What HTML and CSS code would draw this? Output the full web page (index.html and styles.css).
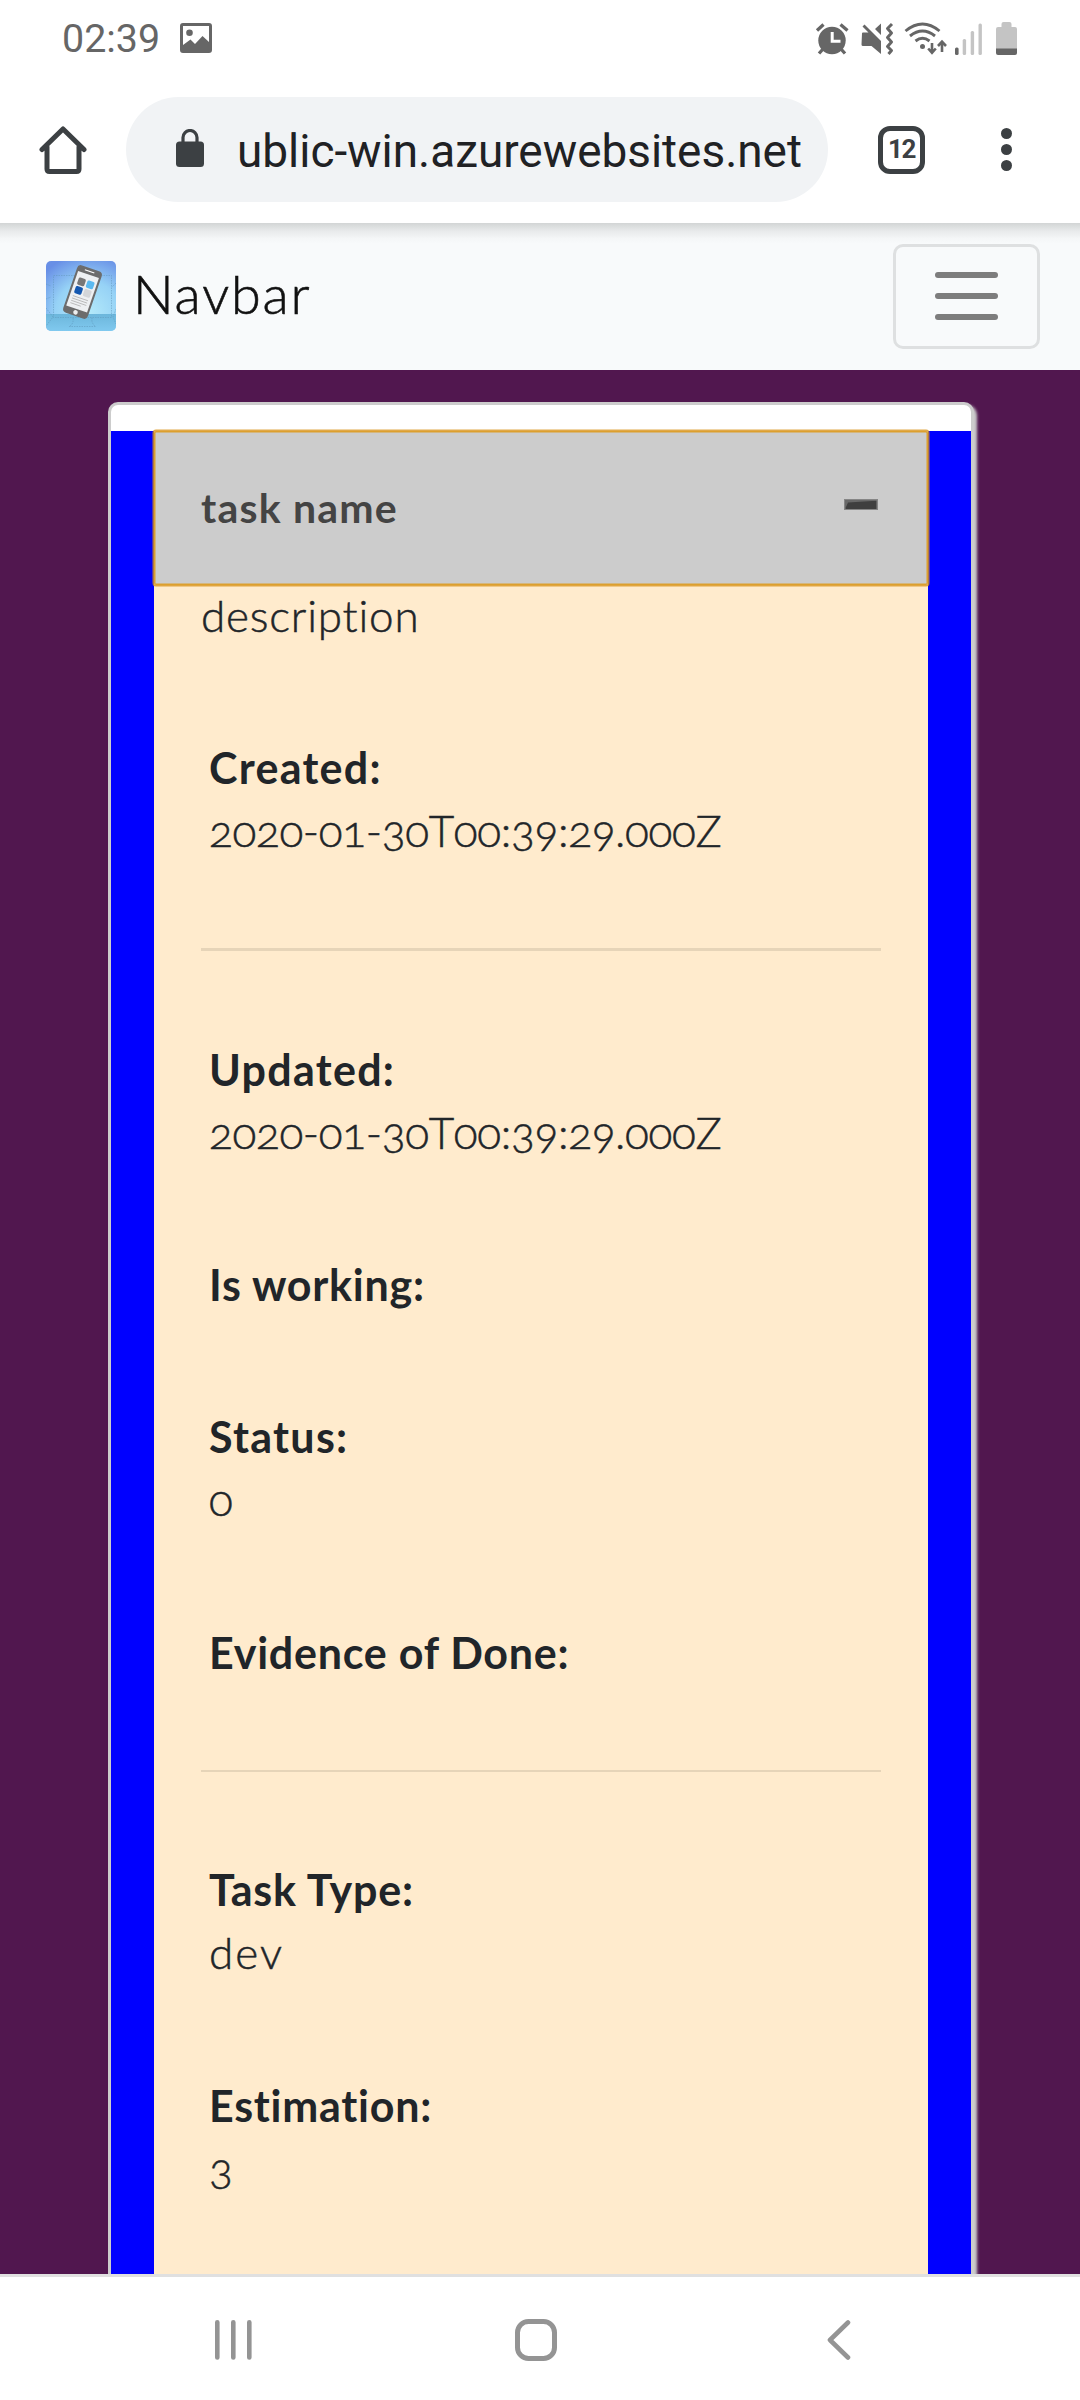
FILE: index.html
```html
<!DOCTYPE html>
<html lang="en">
<head>
  <meta charset="utf-8">
  <title>Navbar</title>
  <link rel="stylesheet" href="styles.css">
</head>
<body>
  <div class="status-bar">
    <span class="clock">02:39</span>
    <svg class="picture-icon" viewBox="0 0 32 30" width="32" height="30">
      <path fill="#666" fill-rule="evenodd" d="M3 0H29Q32 0 32 3V27Q32 30 29 30H3Q0 30 0 27V3Q0 0 3 0ZM3 3V22L10.500 16.500 15 21 22.500 13 29 19V3Z"/>
      <circle cx="9.500" cy="9.700" r="3.300" fill="#666"/>
    </svg>
    <svg class="status-icons" viewBox="815 20 204 36" width="204" height="36">
      <g fill="none" stroke="#666" stroke-width="3.300">
        <path d="M817 30.500L823.500 24.500M840.500 24.500L847.500 30.500M823 49L819 53.500M841 49L845 53.500"/>
        <circle cx="832" cy="40.500" r="13.700" fill="#666" stroke="none"/>
        <path d="M832.200 32V41.200H840.500" stroke="#fff" stroke-width="3"/>
      </g>
      <path fill="#666" d="M862 33.500Q862 32.500 863 32.500H868.500L862.500 26.500 864.500 24.500 881 41V54L871.500 46H863Q861.500 46 861.500 44.500ZM875 29L881 23.500V35Z"/>
      <path fill="none" stroke="#666" stroke-width="3" stroke-linejoin="round" d="M892 24L887.500 28.500 891.500 33 887.500 37.500 891.500 42 887.500 46.500 891.500 50.500 888.500 54"/>
      <g fill="none" stroke="#666" stroke-width="2.900">
        <path d="M905.500 31Q922.500 17 939.500 31M910 36Q922.500 26 935 36M915.500 41Q922.500 35.500 929.500 41"/>
        <circle cx="922.500" cy="46.500" r="2.500" fill="#666" stroke="none"/>
        <path stroke-width="2.600" d="M932 43V53M928.200 48.500L932 52.700 935.800 48.500M942 52V42M938 46L942 41.700 946 46"/>
      </g>
      <g fill="#c4c4c4">
        <rect x="955" y="47.500" width="3.600" height="7.500" rx="1.500" fill="#666"/>
        <rect x="962.700" y="39" width="3.400" height="16" rx="1.500"/>
        <rect x="970.700" y="31" width="3.400" height="24" rx="1.500"/>
        <rect x="978.500" y="23.500" width="3.400" height="31.500" rx="1.500"/>
        <path d="M996 29Q996 27 998 27H1001.500V24Q1001.500 22 1003.500 22H1009.500Q1011.500 22 1011.500 24V27H1015Q1017 27 1017 29V49H996Z"/>
        <path fill="#666" d="M996 48.500H1017V53Q1017 55 1015 55H998Q996 55 996 53Z"/>
      </g>
    </svg>
  </div>

  <div class="browser-bar">
    <svg class="home-icon" viewBox="0 0 48 48" width="48" height="48">
      <path fill="none" stroke="#3c4043" stroke-width="5" stroke-linejoin="round" stroke-linecap="round" d="M3 23.500L24 3 45 23.500M8 21V43Q8 45.500 10.500 45.500H37.500Q40 45.500 40 43V21"/>
    </svg>
    <div class="address">
      <svg viewBox="0 0 28 38" width="28" height="38">
        <rect x="0" y="12.500" width="28" height="25.500" rx="3.500" fill="#3c4043"/>
        <path fill="none" stroke="#3c4043" stroke-width="3.200" d="M7 14V8.500A7 7 0 0 1 21 8.500V14"/>
      </svg>
      <span class="url">ublic-win.azurewebsites.net</span>
    </div>
    <div class="tab-count">12</div>
    <div class="more"><i></i><i></i><i></i></div>
  </div>

  <nav class="navbar">
    <svg class="logo" viewBox="0 0 70 70" width="70" height="70">
      <defs>
        <radialGradient id="sky" cx="0.600" cy="0.750" r="0.850">
          <stop offset="0" stop-color="#b4eafa"/>
          <stop offset="0.550" stop-color="#96d2f6"/>
          <stop offset="1" stop-color="#688fe6"/>
        </radialGradient>
        <linearGradient id="floor" x1="0" y1="0" x2="0" y2="1">
          <stop offset="0" stop-color="#6cb6db"/>
          <stop offset="1" stop-color="#80c9ef"/>
        </linearGradient>
      </defs>
      <rect width="70" height="70" fill="url(#sky)"/>
      <rect y="53" width="70" height="17" fill="url(#floor)"/>
      <path fill="none" stroke="#5d94b8" stroke-opacity="0.700" stroke-width="0.700" stroke-dasharray="1.500 1" d="M7.500 14.500H65.500V56.500H7.500ZM0 23L5 25M0 38L5 36M0 47L7 56 0 65M27 57Q28 63 23 65.500H49.500Q45 62 46 57M70 22L66 26M70 48L67 56 70 63"/>
      <g transform="translate(36.500 31) rotate(19)">
        <rect x="-13" y="-25" width="26" height="50" rx="4" fill="#6c6c6c"/>
        <rect x="-11" y="-18.500" width="22" height="36.500" fill="#eef0f2"/>
        <path stroke="#fff" stroke-width="1.200" d="M-5 -21.800H5"/>
        <circle cy="21.500" r="2.300" fill="#eee"/>
        <rect x="-8" y="-13" width="7.500" height="7.500" rx="1.500" fill="#777"/>
        <rect x="1.200" y="-13" width="7.500" height="7.500" rx="1.500" fill="#5bb9f0"/>
        <rect x="-8" y="-4" width="7.500" height="7.500" rx="1.500" fill="#1558b0"/>
        <rect x="1.200" y="-4" width="7.500" height="7.500" rx="1.500" fill="#d4d6d9"/>
        <path stroke="#bbb" stroke-width="0.900" d="M-8 6.500H8M-8 9H8M-8 11.500H8M-8 14H3"/>
      </g>
    </svg>
    <span class="brand">Navbar</span>
    <button class="toggler" aria-label="Toggle navigation"><i></i><i></i><i></i></button>
  </nav>

  <main class="page">
    <article class="card">
      <div class="card-body">
        <div class="task">
          <header class="task-header">
            <span>task name</span>
            <svg class="minus" viewBox="0 0 34 11" width="34" height="11">
              <rect width="34" height="11" fill="#858585"/>
              <rect x="1.500" y="1.500" width="31" height="8.500" fill="#3f3f3f"/>
              <path fill="#686868" d="M1 1H32V1.800L4 3.500 2 8H1Z"/>
            </svg>
          </header>
          <div class="details">
            <p class="description">description</p>
            <section class="group">
              <div class="field"><b class="wide">Created:</b><span>2020-01-30T00:39:29.000Z</span></div>
            </section>
            <hr>
            <section class="group">
              <div class="field"><b class="wide">Updated:</b><span>2020-01-30T00:39:29.000Z</span></div>
              <div class="field"><b>Is working:</b></div>
              <div class="field"><b class="wide">Status:</b><span>0</span></div>
              <div class="field"><b>Evidence of Done:</b></div>
            </section>
            <hr>
            <section class="group">
              <div class="field"><b>Task Type:</b><span class="word">dev</span></div>
              <div class="field"><b>Estimation:</b><span>3</span></div>
            </section>
          </div>
        </div>
      </div>
    </article>
  </main>

  <footer class="system-nav">
    <svg viewBox="0 0 40 42" width="40" height="42"><path stroke="#949494" stroke-width="4.600" stroke-linecap="round" d="M3.300 3.200V38.500M19.300 3.200V38.500M35.300 3.200V38.500"/></svg>
    <svg class="home-key" viewBox="0 0 42 42" width="42" height="42"><rect x="2.500" y="2.500" width="37" height="37" rx="11" fill="none" stroke="#949494" stroke-width="5"/></svg>
    <svg viewBox="0 0 24 42" width="24" height="42"><path fill="none" stroke="#949494" stroke-width="4.600" stroke-linecap="round" stroke-linejoin="round" d="M21 3.500L3 21 21 38.500"/></svg>
  </footer>
</body>
</html>
```
FILE: styles.css
```css
* { box-sizing: border-box; }

body {
  margin: 0;
  width: 1080px;
  height: 2400px;
  display: flex;
  flex-direction: column;
  overflow: hidden;
  background: #fff;
  color: #212529;
  font-family: Lato, "Liberation Sans", sans-serif;
}

svg { display: block; flex: none; }

/* Device status bar */
.status-bar {
  height: 76px;
  flex: none;
  display: flex;
  align-items: flex-start;
  padding-left: 62px;
}
.clock {
  width: 118px;
  font: 39.4px/46px Roboto, sans-serif;
  color: #666;
  padding-top: 16px;
}
.picture-icon { margin-top: 23px; }
.status-icons { margin: 20px 61px 0 auto; }

/* Browser toolbar */
.browser-bar {
  height: 147px;
  flex: none;
  display: flex;
  align-items: center;
  padding: 0 68px 0 39px;
}
.address {
  width: 702px;
  height: 105px;
  margin-left: 39px;
  padding-left: 50px;
  display: flex;
  align-items: center;
  border-radius: 53px;
  background: #f1f3f5;
}
.address svg { margin-top: -4px; }
.url {
  margin: 2px 0 0 33px;
  font: 45.9px/54px Roboto, sans-serif;
  color: #202124;
}
.tab-count {
  width: 47px;
  height: 48px;
  margin-left: 50px;
  border: 5px solid #3c4043;
  border-radius: 12px;
  font: bold 26px/37px Roboto, sans-serif;
  letter-spacing: -1.5px;
  text-align: center;
  color: #3c4043;
}
.more {
  margin-left: auto;
  display: flex;
  flex-direction: column;
  gap: 5px;
}
.more i {
  width: 11px;
  height: 11px;
  border-radius: 50%;
  background: #3c4043;
}

/* Site navbar, shaded under the toolbar */
.navbar {
  height: 147px;
  flex: none;
  display: flex;
  align-items: center;
  padding: 0 40px 1px 46px;
  background: linear-gradient(#d2d5d5, #e8eaeb 8px, #f5f7f8 16px, #f8fafb 21px) #f8fafb;
}
.logo { border-radius: 5px; }
.brand {
  margin: -5px 0 0 17px;
  font-size: 54px;
  font-weight: 300;
  line-height: 79px;
  letter-spacing: 1.8px;
  color: #111;
  -webkit-text-stroke: 0.6px #111;
}
.toggler {
  width: 147px;
  height: 105px;
  margin: 0 0 0 auto;
  padding: 0 0 1px;
  display: flex;
  flex-direction: column;
  align-items: center;
  justify-content: center;
  gap: 15px;
  border: 3px solid #dee0e1;
  border-radius: 10px;
  background: none;
}
.toggler i {
  width: 63px;
  height: 6px;
  border-radius: 3px;
  background: #7d7d7d;
}

/* Page and task card */
.page {
  flex: 1;
  min-height: 0;
  overflow: hidden;
  padding: 32px 106px 0 108px;
  background: #51174f;
}
.card {
  height: 2000px;
  padding-top: 26px;
  border: 3px solid #ccc;
  border-radius: 10px;
  background: #fff;
  box-shadow: 3px 3px 3px #ccc;
}
.card-body {
  height: 100%;
  padding: 0 43px;
  background: #00f;
}
.task {
  height: 100%;
  background: #ffebcd;
}
.task-header {
  height: 154px;
  padding: 0 50px 2px 47px;
  display: flex;
  align-items: center;
  justify-content: space-between;
  background: #ccc;
  color: #444;
  font-size: 41px;
  font-weight: 700;
  letter-spacing: 1.2px;
  border-radius: 2px;
  box-shadow: 0 0 0 1.5px rgba(216, 148, 28, 0.8), inset 0 0 0 1.5px #dc9f2e;
}
.minus { margin-top: -6px; }
.details {
  padding: 0 47px;
  font-size: 44px;
  font-weight: 300;
  line-height: 63px;
  font-feature-settings: "onum";
  -webkit-text-stroke: 0.5px #212529;
}
.description {
  margin: -1px 0 89px;
  letter-spacing: 0.8px;
}
.group {
  display: flex;
  flex-direction: column;
  gap: 89.4px;
  padding: 0 8px;
}
.field {
  display: flex;
  flex-direction: column;
  letter-spacing: -0.3px;
}
.field b {
  font-size: 43px;
  font-weight: 700;
  letter-spacing: 0.75px;
  -webkit-text-stroke: 0;
}
.field .wide { letter-spacing: 1.3px; }
.field .word { letter-spacing: 2.1px; }
hr {
  height: 3px;
  margin: 86px 0 86.5px;
  border: 0;
  background: #e6d4b8;
}
hr:last-of-type { height: 2px; }

/* System navigation */
.system-nav {
  height: 126px;
  flex: none;
  display: flex;
  align-items: center;
  justify-content: space-between;
  padding: 2px 229px 0 214px;
  border-top: 3px solid #e0e0e0;
  background: #fff;
}
.home-key { margin-right: 10px; }
```
